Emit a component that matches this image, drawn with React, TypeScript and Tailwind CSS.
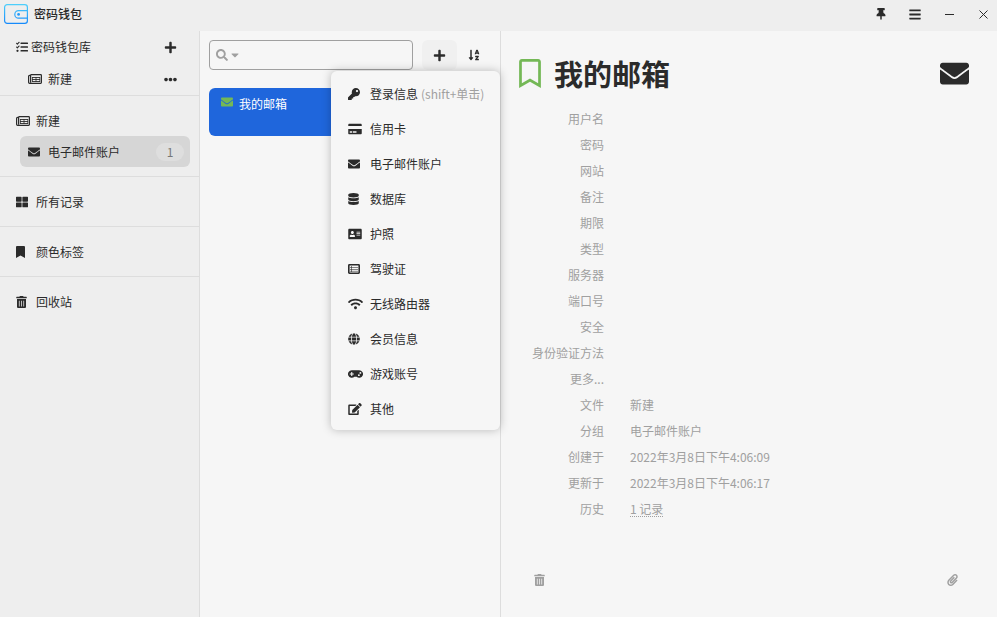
import { useState } from "react"
import type { ComponentType, ReactNode } from "react"
import {
  FaAddressCard,
  FaBars,
  FaBookmark,
  FaCaretDown,
  FaCreditCard,
  FaDatabase,
  FaEdit,
  FaEllipsisH,
  FaEnvelope,
  FaGamepad,
  FaGlobe,
  FaKey,
  FaPaperclip,
  FaPlus,
  FaRegBookmark,
  FaSearch,
  FaSortAlphaDown,
  FaTasks,
  FaThLarge,
  FaThumbtack,
  FaTrashAlt,
  FaWifi,
} from "react-icons/fa"

type Icon = ComponentType<{ className?: string }>

// The glyphs share a 12px height but not a width, so each one brings its own.
type Template = { icon: Icon; size: string; label: string; hint?: string }

const templates: Template[] = [
  { icon: FaKey, size: "h-3 w-3", label: "登录信息", hint: "(shift+单击)" },
  { icon: FaCreditCard, size: "h-3 w-[14px]", label: "信用卡" },
  { icon: FaEnvelope, size: "h-3 w-3", label: "电子邮件账户" },
  { icon: FaDatabase, size: "h-3 w-[11px]", label: "数据库" },
  { icon: FaAddressCard, size: "h-3 w-[14px]", label: "护照" },
  { icon: ListIcon, size: "h-3 w-3", label: "驾驶证" },
  { icon: FaWifi, size: "h-3 w-[15px]", label: "无线路由器" },
  { icon: FaGlobe, size: "h-3 w-3", label: "会员信息" },
  { icon: FaGamepad, size: "h-3 w-[15px]", label: "游戏账号" },
  { icon: FaEdit, size: "h-3 w-[14px]", label: "其他" },
]

const fields: { label: string; value?: ReactNode }[] = [
  { label: "用户名" },
  { label: "密码" },
  { label: "网站" },
  { label: "备注" },
  { label: "期限" },
  { label: "类型" },
  { label: "服务器" },
  { label: "端口号" },
  { label: "安全" },
  { label: "身份验证方法" },
  { label: "更多..." },
  { label: "文件", value: "新建" },
  { label: "分组", value: "电子邮件账户" },
  { label: "创建于", value: "2022年3月8日下午4:06:09" },
  { label: "更新于", value: "2022年3月8日下午4:06:17" },
  { label: "历史", value: <a href="#history" className="underline decoration-dotted underline-offset-2">1 记录</a> },
]

function Logo() {
  return (
    <svg width="24" height="20" viewBox="0 0 24 20" fill="none" aria-hidden="true">
      <defs>
        <linearGradient id="logo" x1="0" y1="0" x2="0" y2="20" gradientUnits="userSpaceOnUse">
          <stop stopColor="#4fd0fb" />
          <stop offset="1" stopColor="#1488fb" />
        </linearGradient>
      </defs>
      <rect x="0.6" y="0.6" width="22.8" height="18.8" rx="2.6" stroke="url(#logo)" strokeWidth="1.2" />
      <path d="M23.4 6.6H14.6a3.8 3.8 0 0 0 0 7.6h8.8" stroke="url(#logo)" strokeWidth="1.2" />
      <circle cx="14.6" cy="10.4" r="1.4" fill="#249cfb" />
    </svg>
  )
}

function NewspaperIcon({ className }: { className?: string }) {
  return (
    <svg viewBox="0 0 14 12" fill="none" stroke="currentColor" className={className}>
      <path d="M2.6 1.7h10a.8.8 0 0 1 .8.8v7a.8.8 0 0 1-.8.8H1.6a1 1 0 0 1-1-1V3.4a1 1 0 0 1 1-1h.8" strokeWidth="1.2" />
      <path d="M2.6 1.7v8" strokeWidth="1.2" />
      <path d="M4 4.5h8M4 6.5h8M4 8.5h8" strokeWidth=".9" />
      <path d="M4.4 4v5M8 4v5M11.8 4v5" strokeWidth=".8" />
    </svg>
  )
}

function ListIcon({ className }: { className?: string }) {
  return (
    <svg viewBox="0 0 12 12" fill="none" stroke="currentColor" className={className}>
      <rect x=".8" y="1.8" width="10.4" height="8.4" rx=".6" strokeWidth="1.6" />
      <path d="M2 4.5h8M2 6.5h8M2 8.3h8" strokeWidth=".8" opacity=".7" />
      <path d="M3.5 3v6" strokeWidth=".9" opacity=".7" />
    </svg>
  )
}

function TitleBar() {
  return (
    <header className="flex h-[31px] items-start bg-[#eeeeee] pl-1">
      <div className="flex h-7 flex-1 items-center">
        <Logo />
        <h1 className="ml-1.5 font-medium">密码钱包</h1>
      </div>
      <button aria-label="置顶" className="flex h-7 w-[34px] items-center justify-center"><FaThumbtack className="h-3 w-3" /></button>
      <button aria-label="菜单" className="flex h-7 w-[34px] items-center justify-center"><FaBars className="h-[13px] w-3" /></button>
      <button aria-label="最小化" className="flex h-7 w-[34px] items-center justify-center">
        <svg width="9" height="9" viewBox="0 0 9 9" stroke="currentColor"><path d="M0 4.5h9" /></svg>
      </button>
      <button aria-label="关闭" className="flex h-7 w-[31px] items-center justify-center pl-1">
        <svg width="9" height="9" viewBox="0 0 9 9" stroke="currentColor"><path d="M.5.5l8 8M8.5.5l-8 8" /></svg>
      </button>
    </header>
  )
}

function MenuSection({ icon: Icon, size, label }: { icon: Icon; size: string; label: string }) {
  return (
    <div className="border-b border-[#dddddd] last:border-b-0">
      <button className="flex h-[49px] w-full items-center pl-4">
        <span className="w-5"><Icon className={size} /></span>
        {label}
      </button>
    </div>
  )
}

function Sidebar() {
  return (
    <nav className="w-[200px] shrink-0 border-r border-[#dddddd] bg-[#eeeeee]">
      <div className="border-b border-[#dddddd]">
        <div className="flex h-8 items-center pr-[22px] pl-4">
          <FaTasks className="h-3 w-3" />
          <span className="ml-[3px] flex-1">密码钱包库</span>
          <button aria-label="添加"><FaPlus className="h-[13px] w-[13px]" /></button>
        </div>
        <div className="flex h-8 items-center pr-[22px] pl-7">
          <NewspaperIcon className="h-3 w-[14px]" />
          <span className="ml-1.5 flex-1">新建</span>
          <button aria-label="更多"><FaEllipsisH className="h-[13px] w-[13px]" /></button>
        </div>
      </div>
      <div className="border-b border-[#dddddd] pt-[9px] pb-[9px]">
        <button className="flex h-[31px] w-full items-center pl-4">
          <span className="w-5"><NewspaperIcon className="h-3 w-[14px]" /></span>
          新建
        </button>
        <button className="ml-5 flex h-[31px] w-[170px] items-center rounded-md bg-[#d6d6d6] pr-1.5 pl-2">
          <span className="w-5"><FaEnvelope className="h-3 w-3" /></span>
          <span className="flex-1 text-left">电子邮件账户</span>
          <span className="w-7 rounded-full bg-[#dedede] text-center leading-[18px] text-[#777777]">1</span>
        </button>
      </div>
      <MenuSection icon={FaThLarge} size="h-3 w-3" label="所有记录" />
      <MenuSection icon={FaBookmark} size="h-3 w-[9px]" label="颜色标签" />
      <MenuSection icon={FaTrashAlt} size="h-3 w-[11px]" label="回收站" />
    </nav>
  )
}

function TemplateMenu() {
  return (
    <div className="absolute top-10 right-0 z-10 w-[169px] rounded-md bg-[#f6f6f6] pt-[5px] pb-1 shadow-[0_0_10px_rgba(0,0,0,0.25)]">
      {templates.map(({ icon: Icon, size, label, hint }) => (
        <button key={label} className="flex h-[35px] w-full items-center pl-[17px]">
          <span className="w-[22px]"><Icon className={size} /></span>
          {label}
          {hint && <span className="ml-[3px] text-[#a0a0a0]">{hint}</span>}
        </button>
      ))}
    </div>
  )
}

function RecordList() {
  const [query, setQuery] = useState("")
  const [isMenuOpen, setMenuOpen] = useState(true)

  return (
    <section className="relative w-[301px] shrink-0 border-r border-[#dddddd] px-[9px] pt-[9px]">
      <div className="flex items-center">
        <label className="flex h-[30px] min-w-0 flex-1 items-center rounded border border-[#a0a0a0] px-1.5 text-[#a0a0a0]">
          <FaSearch className="h-3 w-3 shrink-0" />
          <FaCaretDown className="ml-[3px] h-3 w-2 shrink-0" />
          <input
            aria-label="搜索"
            className="min-w-0 flex-1 bg-transparent pl-1 text-[#2b2b2b] outline-none"
            value={query}
            onChange={(e) => setQuery(e.target.value)}
          />
        </label>
        <button
          aria-label="新建记录"
          className="ml-[9px] flex h-[30px] w-[35px] items-center justify-center rounded-md bg-[#f0f0f0]"
          onClick={() => setMenuOpen(!isMenuOpen)}
        >
          <FaPlus className="h-[13px] w-[13px]" />
        </button>
        <button aria-label="排序" className="flex h-[30px] w-[34px] items-center justify-center"><FaSortAlphaDown className="h-3 w-3" /></button>
      </div>
      <button className="mt-[18px] flex h-12 w-full items-start rounded-md bg-[#1f66dc] px-3 pt-[7px] text-white">
        <FaEnvelope className="mt-px h-3 w-3 text-[#74b856]" />
        <span className="ml-1.5">我的邮箱</span>
      </button>
      {isMenuOpen && <TemplateMenu />}
    </section>
  )
}

function RecordDetails() {
  return (
    <main className="flex min-w-0 flex-1 flex-col pr-7 pl-[18px]">
      <div className="flex items-center pt-[22px]">
        <FaRegBookmark className="h-[29px] w-[22px] text-[#74b856]" />
        <h2 className="ml-[13px] flex-1 text-[29px] leading-10 font-bold">我的邮箱</h2>
        <FaEnvelope className="h-[29px] w-[29px]" />
      </div>
      <dl className="mt-[13px] text-[#a0a0a0]">
        {fields.map(({ label, value }) => (
          <div key={label} className="flex h-[26px] items-center">
            <dt className="w-[85px] text-right">{label}</dt>
            <dd className="ml-[26px]">{value}</dd>
          </div>
        ))}
      </dl>
      <div className="mt-auto flex justify-between pr-[11px] pb-[31px] pl-[15px] text-[#a0a0a0]">
        <button aria-label="删除"><FaTrashAlt className="h-3 w-[11px]" /></button>
        <button aria-label="附件"><FaPaperclip className="h-3 w-[11px]" /></button>
      </div>
    </main>
  )
}

export default function App() {
  return (
    <div className="flex min-h-screen flex-col bg-[#f6f6f6] font-['Noto_Sans_CJK_SC',sans-serif] text-[12px] leading-[18px] text-[#2b2b2b]">
      <TitleBar />
      <div className="flex flex-1">
        <Sidebar />
        <RecordList />
        <RecordDetails />
      </div>
    </div>
  )
}
